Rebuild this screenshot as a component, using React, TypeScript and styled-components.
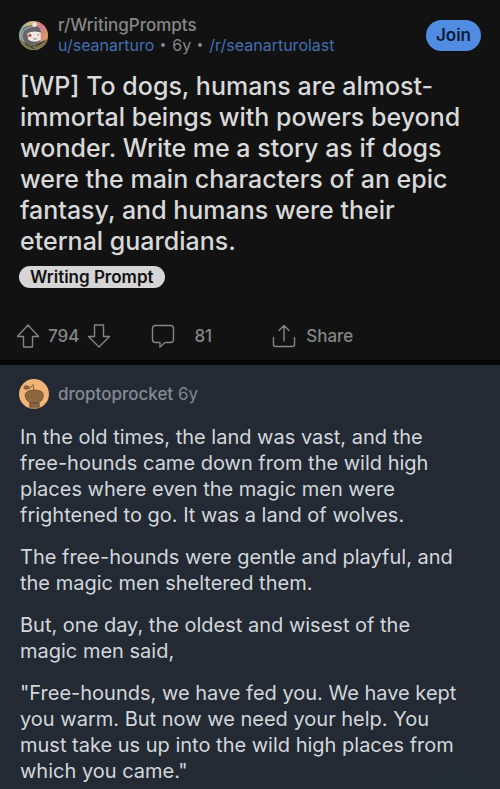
import React from 'react';
import styled, { createGlobalStyle } from 'styled-components';

const GlobalStyle = createGlobalStyle`
  * { box-sizing: border-box; }
  body {
    margin: 0;
    background: #232a33;
    font-family: Inter, 'Liberation Sans', sans-serif;
  }
  button { font-family: inherit; cursor: pointer; }
`;

const Post = styled.article`
  background: #121212;
  border-bottom: 5px solid #070707;
  padding: 16px 19px 12px;
`;

const PostHeader = styled.header`
  display: flex;
  align-items: center;
  gap: 10px;
  height: 38px;
`;

const Avatar = styled.svg<{ $size: number }>`
  flex: none;
  width: ${(p) => p.$size}px;
  height: ${(p) => p.$size}px;
`;

const PostMeta = styled.div`
  flex: 1;
  display: flex;
  flex-direction: column;
  font-size: 16px;
  line-height: 20px;
  color: #878787;
  white-space: nowrap;
`;

const Community = styled.a`
  color: #878787;
  font-size: 17px;
  font-weight: 500;
  text-decoration: none;
`;

const Byline = styled.div`
  display: flex;
  align-items: center;
  gap: 7px;
`;

const Dot = styled.span`
  width: 4px;
  height: 4px;
  border-radius: 50%;
  background: #878787;
`;

const UserLink = styled.a`
  color: #416fb4;
  text-decoration: none;
`;

const JoinButton = styled.button`
  height: 31px;
  padding: 0 10px;
  border: 0;
  border-radius: 16px;
  background: #4f8ce2;
  color: #0c1a35;
  font-size: 17px;
  font-weight: 600;
`;

const Title = styled.h1`
  margin: 17px 0 9px;
  padding-left: 1px;
  color: #d9d9d9;
  font-size: 25px;
  line-height: 31px;
  font-weight: 500;
`;

const Flair = styled.span`
  display: block;
  width: fit-content;
  padding: 0 11px;
  border-radius: 11px;
  background: #d6d6d6;
  color: #111111;
  font-size: 17px;
  line-height: 22px;
  font-weight: 600;
`;

const Actions = styled.div`
  display: flex;
  align-items: center;
  margin: 36px 0 0 -3px;
  color: #858585;
  font-size: 17px;
  line-height: 24px;
  font-weight: 500;
`;

const Votes = styled.div`
  display: flex;
  align-items: center;
  gap: 8px;
  margin-right: 40px;
`;

const ActionButton = styled.button<{ $gap?: number; $after?: number }>`
  display: flex;
  align-items: center;
  gap: ${(p) => p.$gap ?? 0}px;
  margin-right: ${(p) => p.$after ?? 0}px;
  padding: 0;
  border: 0;
  background: none;
  color: inherit;
  font-size: inherit;
  font-weight: inherit;
  line-height: inherit;
`;

const Icon = styled.svg`
  width: 24px;
  height: 24px;
  fill: none;
  stroke: currentColor;
  stroke-width: 1.4;
  stroke-linejoin: round;
  stroke-linecap: round;
`;

const Comment = styled.article`
  background: #232a33;
  padding: 14px 36px 0 19px;
`;

const CommentHeader = styled.header`
  display: flex;
  align-items: center;
  gap: 9px;
  margin-bottom: 15px;
  color: #7f858e;
  font-size: 17px;
  line-height: 30px;
`;

const Author = styled.a`
  color: #868b93;
  font-weight: 500;
  text-decoration: none;
`;

const Paragraph = styled.p`
  margin: 0 0 16px;
  padding-left: 1px;
  color: #d3d7dc;
  font-size: 20px;
  line-height: 26px;

  &:last-child { margin-bottom: 0; }
`;

const JumpButton = styled.button`
  position: fixed;
  right: 16px;
  bottom: -33px;
  width: 52px;
  height: 52px;
  border: 0;
  border-radius: 50%;
  background: #202c31;
`;

const ArrowUp = () => (
  <Icon viewBox="0 0 24 24">
    <path d="M12 1 22.5 12.5H16.5V23H7.5V12.5H1.5Z" />
  </Icon>
);

const ArrowDown = () => (
  <Icon viewBox="0 0 24 24">
    <path d="M12 23 22.5 12.5H16.5V1H7.5V12.5H1.5Z" />
  </Icon>
);

const Bubble = () => (
  <Icon viewBox="0 0 24 24">
    <path d="M4.5 1.5H19.5Q22.5 1.5 22.5 4.5V15.5Q22.5 18.5 19.5 18.5H14L9 23V18.5H4.5Q1.5 18.5 1.5 15.5V4.5Q1.5 1.5 4.5 1.5Z" />
  </Icon>
);

const ShareIcon = () => (
  <Icon viewBox="0 0 24 24">
    <path d="M12 17V1.5M7 6.5 12 1.5 17 6.5M1.5 13.5V20.5Q1.5 22.5 3.5 22.5H20.5Q22.5 22.5 22.5 20.5V13.5" />
  </Icon>
);

const CommunityAvatar = () => (
  <Avatar $size={29} viewBox="0 0 28 28" aria-hidden="true">
    <defs>
      <clipPath id="community"><circle cx="14" cy="14" r="14" /></clipPath>
      <linearGradient id="rainbow" x1="0" y1="0.3" x2="1" y2="0.6">
        <stop offset="0" stopColor="#70a7aa" />
        <stop offset="0.3" stopColor="#d9bd79" />
        <stop offset="0.65" stopColor="#d67991" />
        <stop offset="1" stopColor="#d5a45c" />
      </linearGradient>
    </defs>
    <g clipPath="url(#community)">
      <rect width="28" height="28" fill="url(#rainbow)" />
      <path d="M0 18 9 20 16 24 28 17V28H0Z" fill="#82754d" />
      <path d="M2 12Q3 5 11 4Q19 3 21 10L20 20Q14 25 6 22Q1 19 2 12Z" fill="#626468" />
      <path d="M2 12Q6 6 14 5M5 20Q1 16 4 11" fill="none" stroke="#9b9e9e" strokeWidth="1.5" />
      <path d="M8 12Q13 9 21 11V18Q15 22 9 18Z" fill="#eee8e1" />
      <circle cx="15" cy="3.5" r="2.2" fill="#eee8e1" />
      <circle cx="10.5" cy="14" r="1.6" fill="#b4574d" />
      <circle cx="18.5" cy="13.5" r="0.8" fill="#b4574d" />
      <path d="M14 17Q15.5 18 17 17" fill="none" stroke="#443a3a" strokeWidth="0.7" />
      <path d="M16 25 25 19M12 25 23 20M6 22 15 27" stroke="#343e32" strokeWidth="1" />
    </g>
  </Avatar>
);

const AuthorAvatar = () => (
  <Avatar $size={30} viewBox="0 0 30 30" aria-hidden="true">
    <defs>
      <clipPath id="author"><circle cx="15" cy="15" r="15" /></clipPath>
    </defs>
    <g clipPath="url(#author)">
      <rect width="30" height="30" fill="#f2b476" />
      <path d="M11 21H20L21 30H10Z" fill="#98704a" />
      <path d="M6 16Q7 11 15 11Q24 11 24.5 16Q24 24 15 25Q7 24 6 16Z" fill="#8c673f" stroke="#5d432d" strokeWidth="0.6" />
      <path d="M11 24H20M11 27H20M11 24V28M20 24V28" fill="none" stroke="#684b32" strokeWidth="0.8" />
      <path d="M10 10 14 5.5 15 11" fill="none" stroke="#5d432d" strokeWidth="0.8" />
      <ellipse cx="7.5" cy="8.5" rx="2.7" ry="1.8" fill="#9d6339" stroke="#5d432d" strokeWidth="0.6" />
    </g>
  </Avatar>
);

const story = [
  'In the old times, the land was vast, and the free-hounds came down from the wild high places where even the magic men were frightened to go. It was a land of wolves.',
  'The free-hounds were gentle and playful, and the magic men sheltered them.',
  'But, one day, the oldest and wisest of the magic men said,',
  '"Free-hounds, we have fed you. We have kept you warm. But now we need your help. You must take us up into the wild high places from which you came."',
];

export default function App() {
  return (
    <main>
      <GlobalStyle />
      <Post>
        <PostHeader>
          <CommunityAvatar />
          <PostMeta>
            <Community href="#">r/WritingPrompts</Community>
            <Byline>
              <UserLink href="#">u/seanarturo</UserLink>
              <Dot />
              <span>6y</span>
              <Dot />
              <UserLink href="#">/r/seanarturolast</UserLink>
            </Byline>
          </PostMeta>
          <JoinButton type="button">Join</JoinButton>
        </PostHeader>
        <Title>
          [WP] To dogs, humans are almost-immortal beings with powers beyond wonder. Write me a story
          as if dogs were the main characters of an epic fantasy, and humans were their eternal
          guardians.
        </Title>
        <Flair>Writing Prompt</Flair>
        <Actions>
          <Votes>
            <ActionButton type="button" aria-label="Upvote"><ArrowUp /></ActionButton>
            <span>794</span>
            <ActionButton type="button" aria-label="Downvote"><ArrowDown /></ActionButton>
          </Votes>
          <ActionButton type="button" $gap={19} $after={60}><Bubble />81</ActionButton>
          <ActionButton type="button" $gap={10}><ShareIcon />Share</ActionButton>
        </Actions>
      </Post>
      <Comment>
        <CommentHeader>
          <AuthorAvatar />
          <div><Author href="#">droptoprocket</Author> 6y</div>
        </CommentHeader>
        {story.map((text) => <Paragraph key={text}>{text}</Paragraph>)}
      </Comment>
      <JumpButton type="button" aria-label="Next comment" />
    </main>
  );
}
